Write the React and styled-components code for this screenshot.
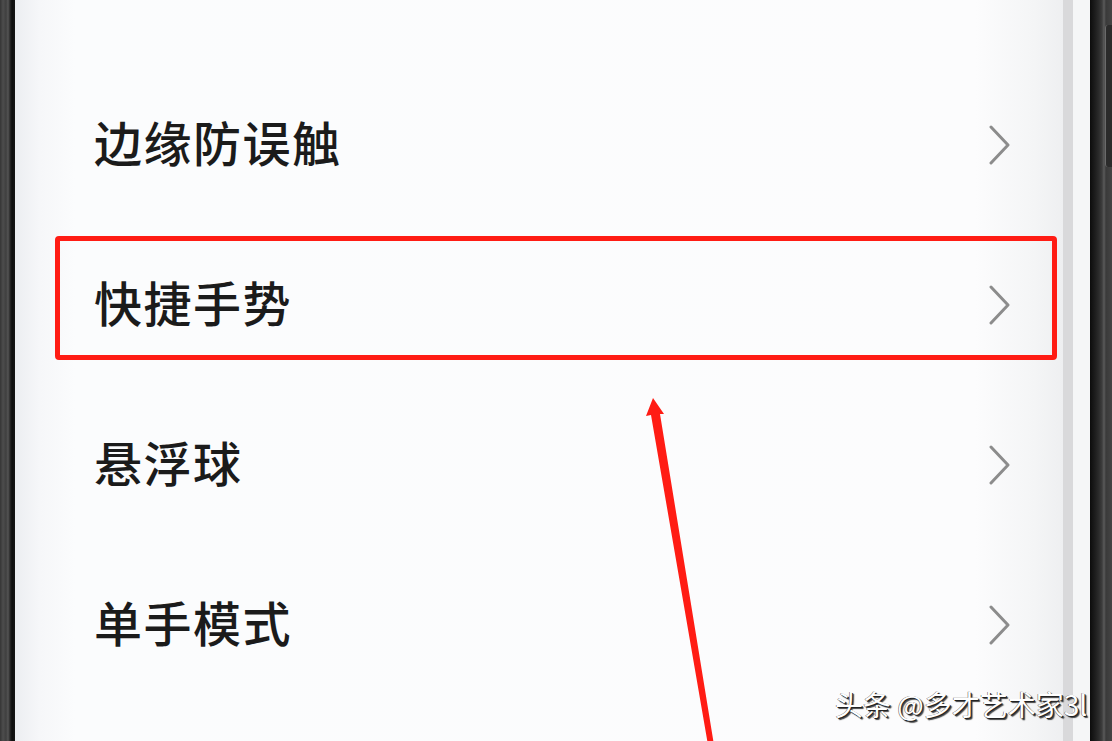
import { createGlobalStyle } from "styled-components";
import styled from "styled-components";

const GlobalStyle = createGlobalStyle`
  html, body {
    margin: 0;
    padding: 0;
    width: 1112px;
    height: 741px;
    overflow: hidden;
    background: #fafbfc;
  }
  #root {
    height: 100%;
  }
`;

const ITEMS = ["边缘防误触", "快捷手势", "悬浮球", "单手模式"];

const Phone = styled.div`
  display: flex;
  width: 1112px;
  height: 741px;
  position: relative;
  overflow: hidden;
  font-family: "Noto Sans CJK SC", "Noto Sans", sans-serif;
`;

const LeftBezel = styled.div`
  width: 15px;
  flex-shrink: 0;
  background: linear-gradient(
    to right,
    #353535 0px,
    #4d4d4d 3px,
    #3f3f3f 6px,
    #555 8px,
    #2a2a2a 10px,
    #0e0e0e 12px,
    #161616 15px
  );
`;

const Screen = styled.div`
  flex: 1;
  position: relative;
  background: linear-gradient(
    to right,
    #eceef1 0px,
    #f6f7f9 25px,
    #fbfcfd 60px,
    #fcfcfd 960px,
    #f4f5f6 1020px,
    #eeeff1 1048px
  );
`;

const List = styled.div`
  display: flex;
  flex-direction: column;
  padding-top: 65px;
`;

const Row = styled.div`
  height: 160px;
  display: flex;
  align-items: center;
  justify-content: space-between;
  padding: 0 52px 0 79px;
`;

const Label = styled.span`
  font-size: 48px;
  font-weight: 500;
  color: #1b1b1b;
  letter-spacing: 1.5px;
  line-height: 1;
  margin-bottom: 9px;
`;

const Chevron = styled.svg`
  width: 22px;
  height: 40px;
  display: block;
`;

const Stripe = styled.div`
  width: ${(p) => p.w}px;
  flex-shrink: 0;
  background: ${(p) => p.color};
`;

const RightBezel = styled.div`
  width: 22px;
  flex-shrink: 0;
  position: relative;
  background: linear-gradient(
    to right,
    #0c0c0c 0px,
    #1d1d1d 5px,
    #2c2c2c 9px,
    #3d3d3d 12px,
    #5a5a5a 14px,
    #3a3a3a 16px,
    #444 22px
  );
`;

const SideButton = styled.div`
  position: absolute;
  left: 15px;
  top: 25px;
  width: 7px;
  height: 142px;
  border-radius: 3px 0 0 3px;
  border-left: 1px solid #6a6a6a;
  background: #2b2b2b;
`;

const Highlight = styled.div`
  position: absolute;
  left: 40px;
  top: 236px;
  width: 992px;
  height: 114px;
  border: 5px solid #ff1c14;
  border-radius: 4px;
`;

const Arrow = styled.svg`
  position: absolute;
  left: 0;
  top: 0;
  width: 1112px;
  height: 741px;
  pointer-events: none;
`;

const Watermark = styled.div`
  position: absolute;
  left: 835px;
  top: 686px;
  white-space: nowrap;
  font-family: "Noto Sans CJK SC", "Liberation Sans", sans-serif;
  font-size: 28px;
  line-height: 36px;
  color: #ffffff;
  text-shadow: 1px 1px 0 #222, 2px 2px 1px #444, -0.5px 0 0 #555;
`;

function ChevronIcon() {
  return (
    <Chevron viewBox="0 0 22 40">
      <polyline
        points="2,2 19,20 2,38"
        fill="none"
        stroke="#8c8c8c"
        strokeWidth="3"
        strokeLinecap="round"
        strokeLinejoin="round"
      />
    </Chevron>
  );
}

export default function App() {
  return (
    <>
      <GlobalStyle />
      <Phone>
        <LeftBezel />
        <Screen>
          <List>
            {ITEMS.map((item) => (
              <Row key={item}>
                <Label>{item}</Label>
                <ChevronIcon />
              </Row>
            ))}
          </List>
          <Highlight />
        </Screen>
        <Stripe w={10} color="#d9d9db" />
        <Stripe w={17} color="#f5f6f7" />
        <RightBezel>
          <SideButton />
        </RightBezel>
        <Arrow viewBox="0 0 1112 741">
          <polygon points="653,398 646,416 651,415 708,745 714,745 660,414 664,414" fill="#ff1c14" />
        </Arrow>
        <Watermark>头条 @多才艺术家3l</Watermark>
      </Phone>
    </>
  );
}
